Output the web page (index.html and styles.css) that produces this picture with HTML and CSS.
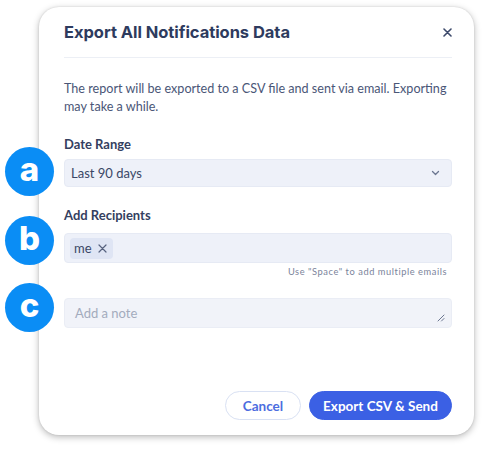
FILE: index.html
```html
<!DOCTYPE html>
<html>
<head>
<meta charset="utf-8">
<link rel="stylesheet" href="styles.css">
</head>
<body>
<div class="stage">
  <div class="modal">
    <div class="modal-header">
      <h1 class="title">Export All Notifications Data</h1>
      <button class="close" aria-label="Close">
        <svg width="9" height="9" viewBox="0 0 9 9"><path d="M1 1L8 8M8 1L1 8" stroke="#3d4a6b" stroke-width="1.6" stroke-linecap="round"/></svg>
      </button>
    </div>
    <div class="modal-body">
      <p class="desc">The report will be exported to a CSV file and sent via email. Exporting may take a while.</p>

      <div class="field field-date">
        <div class="label">Date Range</div>
        <div class="select">
          <span>Last 90 days</span>
          <svg width="9" height="6" viewBox="0 0 9 6"><path d="M1.5 1.5L4.5 4.5L7.5 1.5" fill="none" stroke="#6b7690" stroke-width="1.3" stroke-linecap="round" stroke-linejoin="round"/></svg>
        </div>
        <span class="badge">a</span>
      </div>

      <div class="field field-recip">
        <div class="label">Add Recipients</div>
        <div class="tags">
          <span class="chip">me
            <svg width="9" height="9" viewBox="0 0 9 9"><path d="M1 1L8 8M8 1L1 8" stroke="#56627f" stroke-width="1.2" stroke-linecap="round"/></svg>
          </span>
        </div>
        <div class="hint">Use "Space" to add multiple emails</div>
        <span class="badge">b</span>
      </div>

      <div class="field field-note">
        <div class="note">
          <span class="placeholder">Add a note</span>
          <svg class="grip" width="8" height="8" viewBox="0 0 8 8"><path d="M7 1L1 7M7 4.5L4.5 7" stroke="#6b7690" stroke-width="1" stroke-linecap="round"/></svg>
        </div>
        <span class="badge">c</span>
      </div>
    </div>
    <div class="modal-footer">
      <button class="btn btn-cancel">Cancel</button>
      <button class="btn btn-primary">Export CSV &amp; Send</button>
    </div>
  </div>
</div>
</body>
</html>
```

FILE: styles.css
```css
* { box-sizing: border-box; }
html, body { margin: 0; padding: 0; background: #ffffff; }
body { font-family: "Lato", "Inter", sans-serif; color: #3a4766; }

.stage { padding: 7px 0 0 39px; width: 483px; height: 450px; }

.modal {
  width: 435px;
  height: 428px;
  background: #ffffff;
  border-radius: 20px;
  box-shadow: 0 2px 7px rgba(0, 0, 0, 0.28), 0 0 2px rgba(0,0,0,0.12);
  display: flex;
  flex-direction: column;
  padding: 0 22px 15px 25px;
}

.modal-header {
  height: 51px;
  display: flex;
  align-items: center;
  justify-content: space-between;
  border-bottom: 1px solid #eceff5;
}
.title {
  margin: 0;
  font-family: "Inter", sans-serif;
  font-weight: 700;
  font-size: 16.5px;
  color: #2e3b5e;
  letter-spacing: -0.05px;
}
.close {
  border: 0; background: none; padding: 0;
  width: 9px; height: 9px; display: flex;
}

.modal-body { padding-top: 22px; }

.desc {
  margin: 0;
  font-size: 12.6px;
  line-height: 18px;
  color: #4a5677;
}

.field { position: relative; }
.field-date { margin-top: 20px; }
.field-recip { margin-top: 20px; }
.field-note { margin-top: 20px; }

.label {
  font-size: 13px;
  font-weight: 700;
  color: #34405f;
  line-height: 16px;
  margin-bottom: 7px;
}
.field-recip .label { margin-bottom: 10px; }

.select {
  height: 28px;
  background: #eef1f9;
  border: 1px solid #e6eaf4;
  border-radius: 4px;
  display: flex;
  align-items: center;
  justify-content: space-between;
  padding: 0 11px 0 6px;
  font-size: 13px;
  color: #3a4766;
}

.tags {
  height: 30px;
  background: #eef1f9;
  border: 1px solid #e6eaf4;
  border-radius: 4px;
  display: flex;
  align-items: center;
  padding: 0 5px;
}
.chip {
  display: inline-flex;
  align-items: center;
  gap: 6px;
  height: 21px;
  padding: 0 6px 0 4px;
  background: #dfe5f4;
  border-radius: 4px;
  font-size: 13px;
  color: #3a4766;
}

.hint {
  text-align: right;
  font-size: 9.3px;
  letter-spacing: 0.55px;
  color: #7b849b;
  margin-top: 3px;
  padding-right: 5px;
  line-height: 12px;
}

.note {
  height: 30px;
  background: #f1f3f9;
  border: 1px solid #eaedf5;
  border-radius: 4px;
  position: relative;
  display: flex;
  align-items: center;
  padding: 0 10px;
}
.placeholder { font-size: 13px; color: #a3abbd; }
.grip { position: absolute; right: 6px; bottom: 5px; }

.badge {
  position: absolute;
  left: -59px;
  width: 49px;
  height: 49px;
  border-radius: 50%;
  background: #0a8df5;
  color: #ffffff;
  font-family: "Inter", sans-serif;
  font-weight: 800;
  font-size: 33px;
  display: flex;
  align-items: center;
  justify-content: center;
  line-height: 1;
  padding-bottom: 4px;
}
.field-date .badge { top: 11px; }
.field-recip .badge { top: 9px; }
.field-note .badge { top: -15px; }

.modal-footer {
  margin-top: auto;
  display: flex;
  justify-content: flex-end;
  gap: 8px;
}
.btn {
  height: 29px;
  border-radius: 15px;
  font-family: "Lato", sans-serif;
  font-size: 13.5px;
  font-weight: 700;
  padding: 0;
  cursor: pointer;
}
.btn-cancel {
  width: 76px;
  background: #ffffff;
  border: 1px solid #d9e1f3;
  color: #4c6de0;
}
.btn-primary {
  width: 143px;
  background: #3b60e4;
  border: 1px solid #3b60e4;
  color: #ffffff;
}
```
